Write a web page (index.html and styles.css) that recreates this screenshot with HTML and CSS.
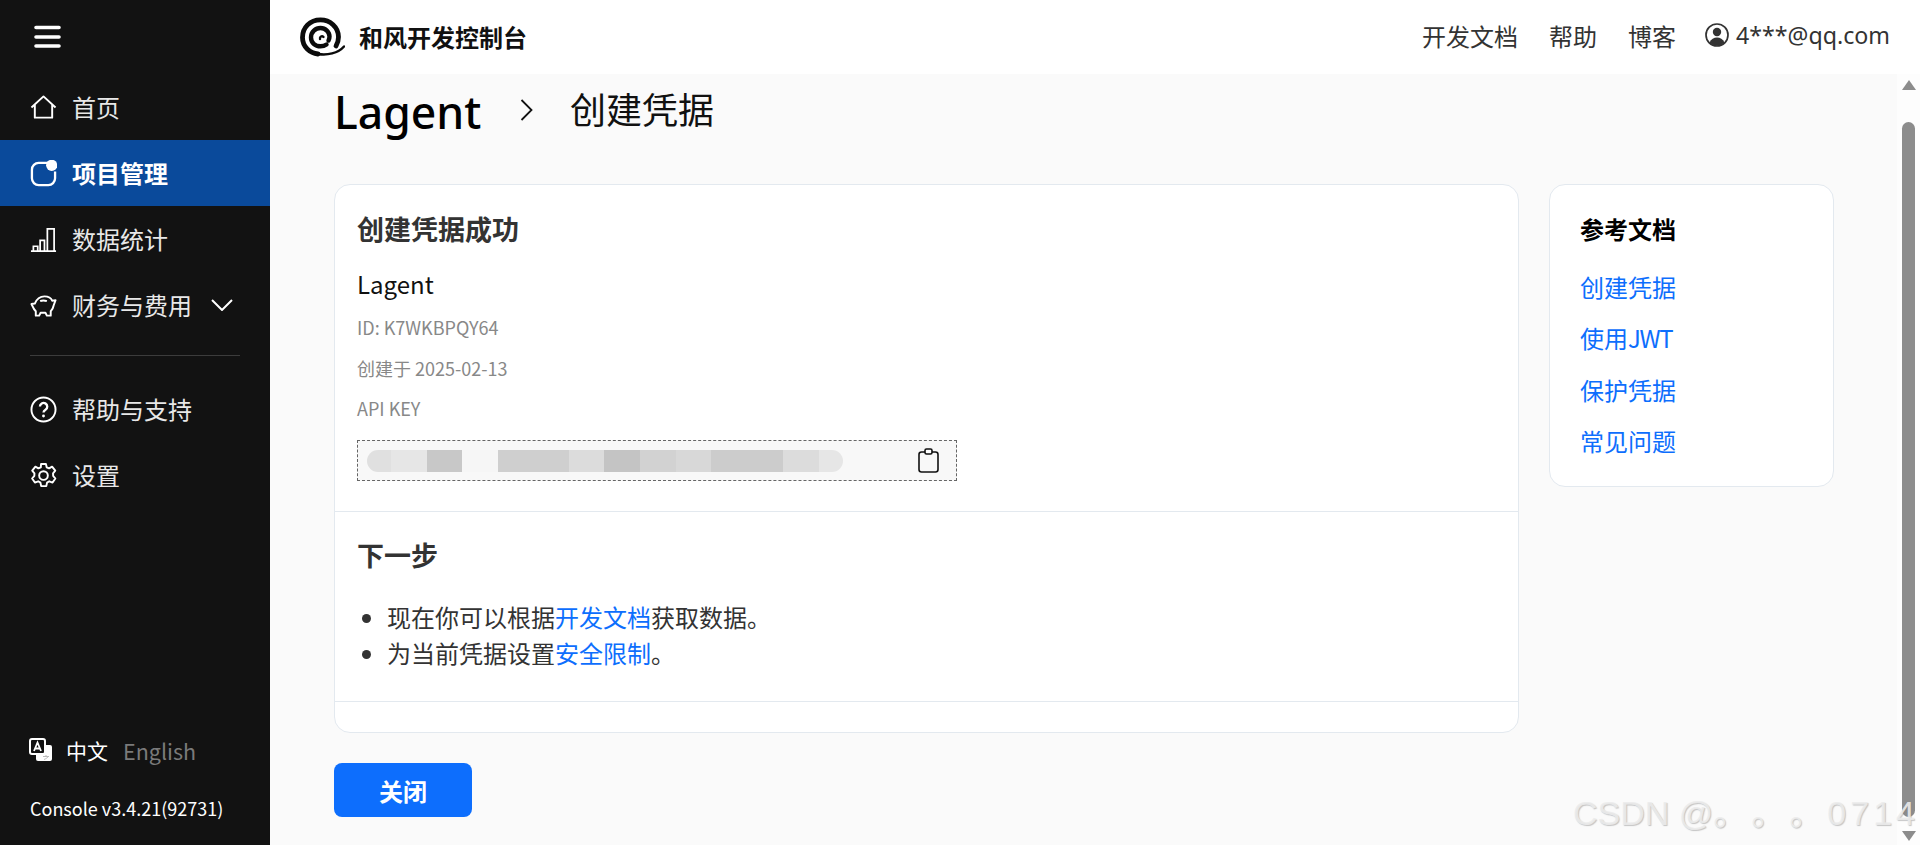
FILE: index.html
```html
<!DOCTYPE html>
<html lang="zh-CN">
<head>
<meta charset="utf-8">
<title>和风开发控制台</title>
<link rel="stylesheet" href="styles.css">
</head>
<body>
<div class="app">
  <aside class="sidebar">
    <div class="burger"><svg width="27" height="24" viewBox="0 0 27 24"><path d="M2 2.500H25M2 12H25M2 21H25" stroke="#fff" stroke-width="3.600" stroke-linecap="round"/></svg></div>
    <nav class="nav">
      <a class="nav-item"><svg class="nav-icon" viewBox="0 0 28 28" fill="none" stroke="#fff" stroke-width="2"><path d="M1.500 14 14 2.500 26.500 14M5 11.500V24.500H23V11.500" stroke-linejoin="round"/></svg><span>首页</span></a>
      <a class="nav-item active"><svg class="nav-icon" viewBox="0 0 28 28" fill="none"><path d="M19 3H9a7 7 0 0 0-7 7v9a7 7 0 0 0 7 7h10a7 7 0 0 0 7-7v-7" stroke="#fff" stroke-width="2.400"/><circle cx="22.500" cy="5.500" r="5.800" fill="#fff"/></svg><span>项目管理</span></a>
      <a class="nav-item"><svg class="nav-icon" viewBox="0 0 28 28" fill="none" stroke="#fff" stroke-width="1.800"><path d="M1 26H27M3.500 26V21H8V26M10.500 26V15H15V26M18 26V3H25V26" /></svg><span>数据统计</span></a>
      <a class="nav-item"><svg class="nav-icon" viewBox="0 0 28 28" fill="none" stroke="#fff" stroke-width="2"><path d="M1.500 12.500 5 12C7 7 11 4.500 15 4.500 19 4.500 22 6.500 23 9L26.500 8.500 24.500 14C24 17 22.500 19 21.500 20V24.500H17.500L16 21.500H11L9.500 24.500H6V20C5 19 4 18 3.500 16.500Z" stroke-linejoin="round"/><path d="M10.500 9.500C12.500 8.500 15 8.500 17.500 9.500"/></svg><span>财务与费用</span><svg class="nav-caret" width="22" height="12" viewBox="0 0 22 12" fill="none"><path d="M1 1 11 11 21 1" stroke="#fff" stroke-width="2"/></svg></a>
    </nav>
    <div class="nav-rule"></div>
    <nav class="nav">
      <a class="nav-item"><svg class="nav-icon" viewBox="0 0 28 28" fill="none" stroke="#fff" stroke-width="2"><circle cx="14" cy="14" r="12.500"/><path d="M10.300 11a3.800 3.800 0 1 1 5.800 3.200c-1.300.8-2.100 1.600-2.100 3" stroke-width="2.400"/><circle cx="14" cy="20.800" r="1.500" fill="#fff" stroke="none"/></svg><span>帮助与支持</span></a>
      <a class="nav-item"><svg class="nav-icon" viewBox="0 0 28 28" fill="none" stroke="#fff" stroke-width="2"><circle cx="14" cy="14" r="4.500"/><path d="M11.500 2h5l.8 3.500 2.500 1.100 3.100-1.800 3.300 4.200-2.300 2.700.1 2.600 2.300 2.800-2.900 4.200-3.400-1.300-2.300 1.400-.8 3.600h-5.300l-.8-3.600-2.300-1.400-3.400 1.300-2.900-4.200 2.300-2.800.1-2.600-2.300-2.700 3.300-4.200 3.100 1.800 2.500-1.100Z" stroke-linejoin="round"/></svg><span>设置</span></a>
    </nav>
    <div class="side-foot">
      <div class="lang">
        <svg class="lang-icon" width="24" height="24" viewBox="0 0 24 24"><rect x="7" y="7" width="16" height="16" rx="2" fill="#fff"/><rect x="1" y="1" width="15" height="15" rx="2" fill="#121212" stroke="#fff" stroke-width="2"/><path d="M5 13 8.500 4.500 12 13M6.200 10.500H10.800" stroke="#fff" stroke-width="1.800" fill="none"/><path d="M14 18.500h6M17 17v1.500M15 21.500c2-.8 3.500-1.800 4.500-3" stroke="#bbb" stroke-width="1" fill="none"/></svg>
        <span class="lang-on">中文</span><span class="lang-off">English</span>
      </div>
      <div class="version">Console v3.4.21(92731)</div>
    </div>
  </aside>
  <div class="main">
    <header class="topbar">
      <div class="brand">
        <svg class="logo" width="45" height="40" viewBox="0 0 45 40" fill="none" stroke="#0b0b0b" stroke-linecap="round"><path d="M36 29C37.800 26 38.500 23 38.500 20 38.500 10 30 2.800 20.500 2.800 10 2.800 2.500 10.500 2.500 20.500 2.500 30 10 36 18 37" stroke-width="4.800"/><path d="M18 37C27 38.500 38 36.500 44 29.500" stroke-width="2.400"/><path d="M26.500 27.500C24.800 28.700 22.800 29.300 20.500 29.300 15 29.300 11 25.500 11 20.500 11 15 15.500 11 20.500 11 25.500 11 29.500 15 29.500 19.500 29.500 21 29 22.500 28.500 23.500" stroke-width="4.400"/><path d="M20 22C19.500 19.500 22 18.500 23.500 20" stroke-width="2.400"/></svg>
        <span class="brand-name">和风开发控制台</span>
      </div>
      <div class="top-links">
        <a>开发文档</a><a>帮助</a><a>博客</a>
        <span class="user"><svg width="24" height="24" viewBox="0 0 24 24"><circle cx="12" cy="12" r="11" fill="none" stroke="#333" stroke-width="1.700"/><circle cx="12" cy="9" r="4.200" fill="#333"/><path d="M4.500 19.500c1.500-3.500 4.500-5 7.500-5s6 1.500 7.500 5c-2 2-4.500 3.200-7.500 3.200s-5.500-1.200-7.500-3.200Z" fill="#333"/></svg><span class="email">4***@qq.com</span></span>
      </div>
    </header>
    <div class="body">
      <main class="content">
        <div class="crumbs">
          <span class="crumb-root">Lagent</span>
          <svg class="crumb-sep" width="13" height="22" viewBox="0 0 13 22" fill="none"><path d="M1.500 1 11.500 11 1.500 21" stroke="#111" stroke-width="1.800"/></svg>
          <span class="crumb-page">创建凭据</span>
        </div>
        <div class="columns">
          <div class="left">
            <section class="card">
              <div class="sec sec-result">
                <h2 class="sec-title">创建凭据成功</h2>
                <div class="cred-name">Lagent</div>
                <div class="meta">ID: K7WKBPQY64</div>
                <div class="meta">创建于 2025-02-13</div>
                <div class="meta">API KEY</div>
                <div class="keybox">
                  <span class="mosaic"></span>
                  <svg class="clip" width="21" height="25" viewBox="0 0 21 25" fill="none" stroke="#111" stroke-width="1.600"><rect x="1" y="4" width="19" height="20" rx="2.500"/><rect x="7" y="1" width="7" height="5" rx="1.500" fill="#fff"/></svg>
                </div>
              </div>
              <div class="sec sec-next">
                <h2 class="sec-title">下一步</h2>
                <ul class="steps">
                  <li>现在你可以根据<a>开发文档</a>获取数据。</li>
                  <li>为当前凭据设置<a>安全限制</a>。</li>
                </ul>
              </div>
              <div class="sec-end"></div>
            </section>
            <button class="close">关闭</button>
          </div>
          <aside class="docs">
            <h3 class="docs-title">参考文档</h3>
            <a>创建凭据</a>
            <a>使用<span class="latin">JWT</span></a>
            <a>保护凭据</a>
            <a>常见问题</a>
          </aside>
        </div>
      </main>
      <div class="scroll">
        <span class="arrow-up"></span>
        <span class="thumb"></span>
        <span class="arrow-down"></span>
      </div>
    </div>
  </div>
</div>
<div class="watermark">CSDN @<span class="wm-wide">。。。0714</span></div>
</body>
</html>
```

FILE: styles.css
```css
* { box-sizing: border-box; }
html, body { margin: 0; height: 100%; overflow: hidden; }
body {
  font-family: "Noto Sans CJK SC", "Noto Sans", sans-serif;
  color: #333;
  background: #fafafa;
}
h2, h3 { margin: 0; }
.app { display: flex; height: 845px; }

.sidebar {
  width: 270px;
  flex: none;
  background: #121212;
  color: #e8e8e8;
  display: flex;
  flex-direction: column;
}
.burger { height: 74px; padding-left: 34px; display: flex; align-items: center; }
.nav { display: flex; flex-direction: column; }
.nav-item {
  height: 66px;
  padding-left: 30px;
  display: flex;
  align-items: center;
  font-size: 24px;
}
.nav-item span { padding-bottom: 2px; }
.nav-item.active { background: #0a4a9b; color: #fff; font-weight: 700; }
.nav-icon { width: 27px; height: 27px; flex: none; margin-right: 15px; }
.nav-caret { margin-left: 19px; }
.nav-rule { height: 1px; margin: 17px 30px 20px; background: #3c3c3c; }
.side-foot { margin-top: auto; padding: 0 30px 22px; }
.lang { display: flex; align-items: center; height: 30px; }
.lang-icon { margin-left: -1px; margin-right: 13px; }
.lang-on { color: #fff; font-size: 21px; margin-right: 15px; }
.lang-off { color: #7a7a7a; font-size: 21.500px; }
.version { margin-top: 28px; color: #fff; font-size: 18px; line-height: 30px; }

.main { flex: 1; min-width: 0; display: flex; flex-direction: column; }
.topbar {
  height: 74px;
  flex: none;
  background: #fff;
  display: flex;
  align-items: center;
  justify-content: space-between;
  padding: 0 30px;
}
.brand { display: flex; align-items: center; }
.logo { margin-right: 14px; }
.brand-name { font-size: 24px; font-weight: 700; color: #111; padding-bottom: 2px; }
.top-links { display: flex; align-items: center; gap: 31px; font-size: 24px; color: #333; padding-bottom: 4px; }
.user { display: flex; align-items: center; gap: 7px; margin-left: -2px; }
.email { font-family: "Noto Sans", sans-serif; font-size: 23.200px; }

.body { flex: 1; min-height: 0; display: flex; }
.content { flex: 1; min-width: 0; padding: 0 63px 0 64px; overflow: hidden; }
.crumbs { height: 72px; display: flex; align-items: center; color: #111; }
.crumb-root { font-family: "Noto Sans", sans-serif; font-size: 44.500px; font-weight: 500; color: #000; padding-top: 2px; width: 149px; }
.crumb-sep { margin: 0 37px; }
.crumb-page { font-size: 36px; padding-bottom: 4px; }
.columns { margin-top: 38px; display: flex; gap: 30px; align-items: flex-start; }
.left { flex: 1; min-width: 0; }

.card { background: #fff; border: 1px solid #e3e9ef; border-radius: 16px; }
.sec { padding-left: 22px; padding-right: 22px; border-bottom: 1px solid #e3e9ef; }
.sec-result { padding-top: 24px; padding-bottom: 30px; }
.sec-next { padding-top: 23px; padding-bottom: 30px; }
.sec-end { height: 30px; }
.sec-title { font-size: 27px; line-height: 40px; font-weight: 700; color: #333; }
.cred-name { margin-top: 15px; margin-bottom: 3px; font-size: 24px; line-height: 40px; color: #111; }
.meta { font-size: 18px; line-height: 40.500px; color: #888; }
.keybox {
  margin-top: 11.500px;
  width: 600px;
  height: 41px;
  border: 1px dashed #666;
  background: #f8f8f8;
  display: flex;
  align-items: center;
  justify-content: space-between;
  padding: 0 17px 0 9px;
}
.mosaic {
  width: 476px;
  height: 22px;
  border-radius: 11px;
  background: linear-gradient(90deg,
    #e0e0e0 0 24px, #e6e6e6 24px 60px, #c8c8c8 60px 95px, #f6f6f6 95px 131px,
    #cfcfcf 131px 202px, #dcdcdc 202px 237px, #c4c4c4 237px 273px, #d2d2d2 273px 309px,
    #d8d8d8 309px 344px, #cccccc 344px 416px, #dcdcdc 416px 452px, #e6e6e6 452px 476px);
}
.steps { margin: 24px 0 0; padding: 0 0 0 30px; font-size: 24px; line-height: 36px; color: #333; }
.steps a { color: #0d6efd; }
.close {
  display: block;
  margin-top: 30px;
  width: 138px;
  height: 54px;
  border: 0;
  border-radius: 8px;
  background: #0d6efd;
  color: #fff;
  font-family: inherit;
  font-size: 24px;
  font-weight: 700;
}

.docs {
  width: 285px;
  flex: none;
  background: #fff;
  border: 1px solid #e3e9ef;
  border-radius: 16px;
  padding: 24px 30px 20px;
  display: flex;
  flex-direction: column;
  font-size: 24px;
  color: #0d6efd;
  line-height: 51.300px;
}
.docs-title { font-size: 24px; line-height: 40px; font-weight: 700; color: #000; margin-bottom: 12px; }
.latin { letter-spacing: -1.300px; }

.scroll {
  width: 23px;
  flex: none;
  background: #fdfdfd;
  display: flex;
  flex-direction: column;
  align-items: center;
  padding: 6px 0 4px 0;
}
.arrow-up, .arrow-down { width: 0; height: 0; border-left: 7.500px solid transparent; border-right: 7.500px solid transparent; }
.arrow-up { border-bottom: 10px solid #8c8c8c; }
.arrow-down { border-top: 10px solid #8c8c8c; margin-top: auto; }
.thumb { width: 13px; height: 695px; margin-top: 32px; border-radius: 7px; background: #8c8c8c; }

.watermark {
  position: absolute;
  right: 1px;
  top: 790px;
  font-family: "Liberation Sans", "Noto Sans CJK SC", sans-serif;
  font-size: 34px;
  line-height: 46px;
  white-space: nowrap;
  color: rgba(236, 236, 236, 0.9);
  text-shadow: 1px 1px 1px rgba(130, 130, 130, 0.45);
}
.wm-wide { letter-spacing: 4px; text-spacing-trim: space-all; }
```
